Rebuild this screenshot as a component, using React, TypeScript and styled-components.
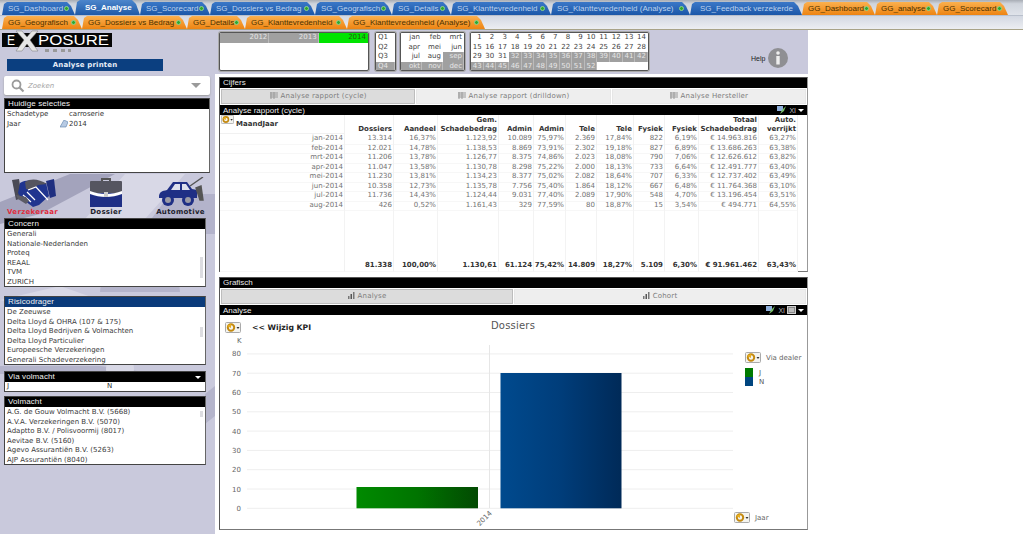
import React from 'react';
import styled, { createGlobalStyle } from 'styled-components';

const Global = createGlobalStyle`
  html, body { margin: 0; padding: 0; background: #fff; overflow: hidden; }
  #root { width: 1023px; height: 549px; overflow: hidden; }
  * { box-sizing: border-box; }
`;
const Page = styled.div`
  width: 1023px; height: 549px; background: #fff; color: #333;
  font-family: "DejaVu Sans", sans-serif; font-size: 7px; display: flex; flex-direction: column;
`;
const TabRow = styled.div<{ $second?: boolean }>`
  height: ${p => (p.$second ? 14 : 16)}px; flex: none; padding-left: 2px; display: flex; align-items: flex-end;
  background: ${p => (p.$second ? 'linear-gradient(#d3d8e2,#eceef2)' : 'linear-gradient(#a8adb5 0,#cfd4dc 25%,#dfe3ea)')};
  border-bottom: 1px solid ${p => (p.$second ? '#a8a388' : '#b9c0cc')};
`;
const Tab = styled.div<{ $w: number; $orange?: boolean; $active?: boolean; $pad: number }>`
  width: ${p => p.$w}px; height: ${p => (p.$active ? 15 : 13)}px; flex: none; display: flex; align-items: center;
  padding: 0 4px 0 ${p => p.$pad}px; white-space: nowrap; overflow: hidden;
  clip-path: polygon(0 100%, 2px 2px, 5px 0, calc(100% - 8px) 0, calc(100% - 4px) 4px, 100% 100%);
  font-family: "Liberation Sans", sans-serif; font-size: 8px;
  font-weight: ${p => (p.$active ? 700 : 400)};
  color: ${p => (p.$orange ? '#4c3200' : p.$active ? '#fff' : '#bcd2ee')};
  background: ${p => (p.$orange ? 'linear-gradient(#fbb04e,#ed8412)' : p.$active ? 'linear-gradient(#4d86cc,#1f5aa8)' : 'linear-gradient(#3b78c8,#1b57a8)')};
`;
const TabDot = styled.span`
  width: 5px; height: 5px; border-radius: 50%; background: #2ea82e; border: 1px solid #8fd08f; margin-left: auto; margin-right: 2px; flex: none;
`;
const TopBand = styled.div`
  width: 808px; height: 44px; background: #c9c9dc; display: flex; align-items: flex-start; flex: none;
`;
const Brand = styled.div`
  width: 219px; flex: none; height: 44px; display: flex; flex-direction: column; align-items: flex-start;
`;
const PrintButton = styled.div`
  width: 156px; height: 12px; margin: 3px 0 0 7px; background: #0b3f80; color: #e8eef8; font-weight: 700;
  font-size: 7px; letter-spacing: .15px; text-align: center; line-height: 12px;
`;
const Selector = styled.div<{ $w: number; $cols: number; $ml: number }>`
  width: ${p => p.$w}px; height: 39px; margin: 2px 0 0 ${p => p.$ml}px; background: #fff; border: 1px solid #555;
  border-radius: 2px; box-shadow: 0 0 0 1px #aaa; display: grid; grid-template-columns: repeat(${p => p.$cols}, minmax(0, 1fr));
  grid-auto-rows: 9.5px; overflow: hidden;
`;
const SelCell = styled.div<{ $state?: 'on' | 'off' | 'green'; $center?: boolean }>`
  text-align: ${p => (p.$center ? 'left' : 'right')}; padding: 0 1px 0 ${p => (p.$center ? 2 : 0)}px; line-height: 9.5px; font-size: 7px;
  white-space: nowrap; border-right: 1px solid ${p => (p.$state === 'off' ? '#bbb' : 'transparent')};
  background: ${p => (p.$state === 'off' ? '#a0a0a0' : p.$state === 'green' ? '#00e400' : '#fff')};
  color: ${p => (p.$state === 'off' ? '#e6e6e6' : p.$state === 'green' ? '#245a10' : '#444')};
`;
const HelpWrap = styled.div`
  margin: 18px 0 0 102px; display: flex; align-items: center; gap: 3px; font-family: "Liberation Sans", sans-serif;
  font-size: 7px; color: #222;
`;
const Body = styled.div`
  flex: 1; display: flex; min-height: 0;
`;
const Sidebar = styled.div`
  position: relative; width: 215px; height: 460px; background: #c9c9dc; flex: none; display: flex; flex-direction: column;
  padding: 2px 0 0 4px; overflow: hidden;
`;
const Watermark = styled.svg`
  position: absolute; left: 0; top: 0; width: 215px; height: 460px;
`;
const SearchBox = styled.div`
  position: relative; width: 206px; height: 19px; background: #fff; border-radius: 2px; box-shadow: 0 1px 2px #999;
  display: flex; align-items: center; padding: 0 7px; gap: 3px; font-size: 7px; font-style: italic; color: #a5a5a5;
`;
const Caret = styled.span`
  margin-left: auto; width: 0; height: 0; border-left: 5px solid transparent; border-right: 5px solid transparent;
  border-top: 5px solid #9a9a9a; margin-right: 2px;
`;
const Box = styled.div<{ $w?: number; $h: number; $mt: number }>`
  position: relative; width: ${p => p.$w ?? 202}px; height: ${p => p.$h}px; margin-top: ${p => p.$mt}px; flex: none;
  background: #fff; border: 1px solid #444; border-right-color: #666; overflow: hidden; display: flex; flex-direction: column;
`;
const BoxTitle = styled.div<{ $navy?: boolean }>`
  height: 10px; flex: none; background: ${p => (p.$navy ? '#0a3a7a' : '#000')}; color: #f0f0f0; padding: 0 3px;
  display: flex; align-items: center; justify-content: space-between;
  font-family: "Liberation Sans", sans-serif; font-size: 8px; letter-spacing: .1px; line-height: 10px;
`;
const WhiteArrow = styled.span`
  width: 0; height: 0; border-left: 3px solid transparent; border-right: 3px solid transparent; border-top: 3px solid #fff; margin-right: 1px;
`;
const ListArea = styled.div`
  flex: 1; padding-top: 1px;
`;
const ListRow = styled.div`
  height: 9.5px; line-height: 9.5px; padding-left: 2px; font-size: 7px; color: #3a3a3a; white-space: nowrap;
`;
const Track = styled.div`
  position: absolute; right: 1px; top: 12px; bottom: 1px; width: 5px; background: #fff;
`;
const Thumb = styled.div<{ $top: number; $h: number }>`
  position: absolute; left: 1px; top: ${p => p.$top}px; height: ${p => p.$h}px; width: 3px; background: #dcdce0;
`;
const SelectionRow = styled.div`
  display: grid; grid-template-columns: 62px 1fr; height: 9.5px; line-height: 9.5px; padding-left: 2px; font-size: 7px; color: #333;
`;
const VolmachtRow = styled(SelectionRow)`
  grid-template-columns: 100px 1fr;
`;
const SelValue = styled.span`
  display: flex; align-items: center; gap: 1px; margin-left: -9px;
`;
const Scenarios = styled.div`
  position: relative; width: 206px; height: 45px; display: grid; grid-template-columns: 57px 90px 1fr; flex: none;
`;
const Scenario = styled.div<{ $active?: boolean }>`
  display: flex; flex-direction: column; align-items: center; height: 45px; font-weight: 700; font-size: 7px; letter-spacing: .3px;
  color: ${p => (p.$active ? '#e02c3c' : '#1d1d2c')}; padding-top: 4px;
  svg { height: 31px; display: block; flex: none; }
  span { line-height: 9px; }
`;
const Main = styled.div`
  width: 593px; padding: 3px 0 0 4px; display: flex; flex-direction: column; gap: 5px;
`;
const Panel = styled.div<{ $h: number }>`
  height: ${p => p.$h}px; flex: none; border: 1px solid #555; border-right-color: #999; border-bottom-color: #777;
  display: flex; flex-direction: column; background: #fff;
`;
const PanelTitle = styled.div`
  height: 10px; background: #000; color: #e8e8e8; padding-left: 3px; font-family: "Liberation Sans", sans-serif;
  font-size: 8px; line-height: 9px; flex: none;
`;
const PanelTabs = styled.div`
  height: 17px; flex: none; display: flex; gap: 1px; background: #fff; padding: 1px;
`;
const PanelTab = styled.div<{ $active?: boolean }>`
  flex: 1; background: ${p => (p.$active ? '#dcdcdc' : '#eeeeee')}; border: 1px solid ${p => (p.$active ? '#bdbdbd' : '#e6e6e6')};
  display: flex; align-items: center; justify-content: center; gap: 3px; font-size: 7px; color: #7c7c7c; letter-spacing: .2px;
  padding-bottom: 2px;
`;
const Caption = styled.div`
  height: 10px; flex: none; background: #000; color: #eee; padding: 0 2px 0 3px; display: flex; justify-content: space-between;
  align-items: center; font-family: "Liberation Sans", sans-serif; font-size: 8px;
`;
const CaptionTools = styled.div`
  display: flex; align-items: center; gap: 2px; font-size: 7px; color: #bbb;
`;
const TableWrap = styled.div`
  flex: 1; display: flex; flex-direction: column; min-height: 0;
`;
const Grid = styled.div<{ $h: number; $bold?: boolean }>`
  display: grid; grid-template-columns: 125px 49px 44px 61px 35px 32px 31px 37px 31px 34px 60px 39px 1fr;
  height: ${p => p.$h}px; flex: none; line-height: ${p => p.$h}px; font-size: 7px; white-space: nowrap;
  font-weight: ${p => (p.$bold ? 700 : 400)}; color: ${p => (p.$bold ? '#333' : '#727272')};
`;
const Cell = styled.div`
  text-align: right; padding-right: 1px; border-right: 1px solid #f1f1f1; border-bottom: 1px solid #f7f7f7;
`;
const HeadCell = styled.div`
  position: relative; text-align: right; padding-right: 1px; font-weight: 700; line-height: 9px; align-self: stretch;
  display: flex; flex-direction: column; justify-content: flex-end; color: #333; border-right: 1px solid #f1f1f1;
`;
const FirstHead = styled.div`
  display: flex; align-items: flex-start; gap: 2px; padding: 0 0 0 1px; text-align: left; font-weight: 700; line-height: 9px; color: #333;
  border-right: 1px solid #f1f1f1; border-bottom: 1px solid #f1f1f1;
  span { margin-top: 5px; }
`;
const Spacer = styled.div`
  flex: 1; display: grid; grid-template-columns: 125px 49px 44px 61px 35px 32px 31px 37px 31px 34px 60px 39px 1fr;
`;
const SpacerCell = styled.div`
  border-right: 1px solid #f3f3f3;
`;
const ChartBody = styled.div`
  position: relative; flex: 1; min-height: 0;
`;
const ChartSvg = styled.svg`
  position: absolute; left: 0; top: 1px; width: 587px; height: 213px;
`;
const KpiControl = styled.div`
  position: absolute; left: 5px; top: 7px; display: flex; align-items: center; gap: 11px; font-weight: 700; font-size: 7.7px; color: #222;
`;
const LegendControl = styled.div`
  position: absolute; left: 525px; top: 37px; display: flex; align-items: center; gap: 5px; font-size: 7px; color: #666;
`;
const JaarControl = styled.div`
  position: absolute; left: 514px; top: 197px; display: flex; align-items: center; gap: 5px; font-size: 7px; color: #666;
`;

const CycleIcon = ({ w = 16 }: { w?: number }) => (
  <svg width={w} height={(w * 11) / 16} viewBox="0 0 16 11">
    <rect x=".5" y=".5" width="15" height="10" rx="1" fill="#f4f4f0" stroke="#aaa" />
    <circle cx="6" cy="5.5" r="3.2" fill="none" stroke="#c48a10" strokeWidth="2" />
    <path d="M2 4l4-2v4z" fill="#e8b020" />
    <path d="M11.5 5h3l-1.5 2z" fill="#333" />
  </svg>
);
const TableIcon = () => (
  <svg width="8" height="7" viewBox="0 0 8 7">
    <path d="M0 1h8M0 3h8M0 5h8M1 0v7M4 0v7" stroke="#999" strokeWidth="1" fill="none" />
  </svg>
);
const BarsIcon = () => (
  <svg width="7" height="7" viewBox="0 0 7 7">
    <rect x="0" y="4" width="1.5" height="3" fill="#777" />
    <rect x="2.5" y="2" width="1.5" height="5" fill="#555" />
    <rect x="5" y="0" width="1.5" height="7" fill="#777" />
  </svg>
);
const XlTools = ({ extra }: { extra?: boolean }) => (
  <CaptionTools>
    <svg width="10" height="9" viewBox="0 0 10 9">
      <rect x="0" y="0" width="6" height="5" fill="#8fb0dc" />
      <path d="M3 8l2-4 4-4-2 5z" fill="#7cc06a" />
    </svg>
    <span>XI</span>
    {extra && (
      <svg width="9" height="8" viewBox="0 0 9 8">
        <rect x=".5" y=".5" width="8" height="7" fill="#888" stroke="#ccc" />
        <path d="M2 3h5M2 5h5" stroke="#eee" />
      </svg>
    )}
    <WhiteArrow />
  </CaptionTools>
);
const Magnifier = () => (
  <svg width="14" height="14" viewBox="0 0 14 14">
    <circle cx="5.5" cy="5.5" r="4" fill="none" stroke="#9b9b9b" strokeWidth="1.8" />
    <path d="M8.5 8.5l4 4" stroke="#9b9b9b" strokeWidth="2.2" />
  </svg>
);
const Handshake = () => (
  <svg viewBox="0 0 48 31" width="48">
    <path d="M3 3l7-1 3 19-6 2z" fill="#4a4a55" />
    <path d="M37 4l8-2 2 17-6 2z" fill="#1f2f80" />
    <path d="M11 6c6-3 10-3 14-1l6 1 6 0 3 13-10 9-6 2-12-9-3-5z" fill="#20358f" />
    <path d="M16 5c6-4 14-3 22 2l-9 1-6 5-6-1z" fill="#55555f" />
    <path d="M19 13l8-3 12 13M14 18l8 7M18 15l8 8" stroke="#fff" strokeWidth="1.2" fill="none" />
    <path d="M7 18l10 2 3 4-3 3-8-5z" fill="#5b5b65" />
  </svg>
);
const Briefcase = () => (
  <svg viewBox="0 0 32 31" width="32">
    <path d="M11 4V1h10v3h-2V3h-6v1z" fill="#555" />
    <rect x="0" y="4" width="32" height="13" rx="1" fill="#555560" />
    <rect x="0" y="16" width="32" height="14" fill="#1f2f85" />
    <path d="M0 14c10 4 22 4 32 0v3c-10 4-22 4-32 0z" fill="#fff" />
    <rect x="14" y="15" width="4" height="5" fill="#ccc" />
  </svg>
);
const Car = () => (
  <svg viewBox="0 0 46 31" width="46">
    <path d="M1 20c0-5 3-6 8-7l6-8h14l5 7 5 1v8H1z" fill="#1f2f85" />
    <path d="M17 7h5v6h-9zM24 7h4l4 6h-8z" fill="#fff" opacity=".85" />
    <circle cx="10" cy="23" r="6" fill="#1f2f85" />
    <circle cx="10" cy="23" r="3" fill="#9a9aa5" />
    <circle cx="30" cy="23" r="6" fill="#1f2f85" />
    <circle cx="30" cy="23" r="3" fill="#9a9aa5" />
    <path d="M32 9L45 0M38 11l5-2 2 14h-3z" stroke="#555" strokeWidth="1.4" fill="#555" />
  </svg>
);
const LogoSvg = styled.svg`
  margin-left: 2px; display: block; flex: none;
`;
const Logo = () => (
  <LogoSvg width="112" height="26" viewBox="0 0 112 26">
    <rect x="0" y="3" width="110" height="14" fill="#060606" />
    <text x="5" y="15" fill="#fff" fontFamily="Liberation Sans, sans-serif" fontSize="14" textLength="8" lengthAdjust="spacingAndGlyphs">E</text>
    <path d="M14 1h6l5 6 5-6h6l-8 9 8 11h-6l-5-7-5 7h-6l8-11z" fill="#e6e6e6" stroke="#777" strokeWidth=".5" />
    <text x="36" y="15" fill="#fff" fontFamily="Liberation Sans, sans-serif" fontSize="14" textLength="71" lengthAdjust="spacingAndGlyphs">POSURE</text>
    <rect x="43" y="19" width="4" height="3" fill="#999" />
    <rect x="51" y="19" width="4" height="3" fill="#999" />
    <rect x="59" y="19" width="4" height="3" fill="#999" />
    <rect x="66" y="19" width="3" height="3" fill="#999" />
  </LogoSvg>
);

type TabDef = { t: string; w: number; o?: boolean; a?: boolean; pad?: number; noDot?: boolean };
const row1: TabDef[] = [
  { t: 'SG_Dashboard', w: 73 }, { t: 'SG_Analyse', w: 65, a: true, pad: 10, noDot: true }, { t: 'SG_Scorecard', w: 70 },
  { t: 'SG_Dossiers vs Bedrag', w: 105 }, { t: 'SG_Geografisch', w: 77 }, { t: 'SG_Details', w: 59 },
  { t: 'SG_Klanttevredenheid', w: 100 }, { t: 'SG_Klanttevredenheid (Analyse)', w: 139 },
  { t: 'SG_Feedback verzekerde', w: 112, pad: 10, noDot: true }, { t: 'GG_Dashboard', w: 73, o: true },
  { t: 'GG_analyse', w: 62, o: true }, { t: 'GG_Scorecard', w: 71, o: true },
];
const row2: TabDef[] = [
  { t: 'GG_Geografisch', w: 80, o: true }, { t: 'GG_Dossiers vs Bedrag', w: 105, o: true }, { t: 'GG_Details', w: 58, o: true },
  { t: 'GG_Klanttevredenheid', w: 102, o: true }, { t: 'GG_Klanttevredenheid (Analyse)', w: 138, o: true },
];
const TabList = ({ tabs }: { tabs: TabDef[] }) => (
  <>
    {tabs.map(({ t, w, o, a, pad, noDot }) => (
      <Tab key={t} $w={w} $orange={o} $active={a} $pad={pad ?? 6}>
        {t}
        {!noDot && <TabDot />}
      </Tab>
    ))}
  </>
);

const months = ['jan', 'feb', 'mrt', 'apr', 'mei', 'jun', 'jul', 'aug', 'sep', 'okt', 'nov', 'dec'];
const weeks = Array.from({ length: 56 }, (_, i) => i + 1);

const lists = {
  concern: ['Generali', 'Nationale-Nederlanden', 'Proteq', 'REAAL', 'TVM', 'ZURICH'],
  risk: ['De Zeeuwse', 'Delta Lloyd & OHRA (107 & 175)', 'Delta Lloyd Bedrijven & Volmachten', 'Delta Lloyd Particulier', 'Europeesche Verzekeringen', 'Generali Schadeverzekering'],
  volmacht: ['A.G. de Gouw Volmacht B.V. (5668)', 'A.V.A. Verzekeringen B.V. (5070)', 'Adaptto B.V. / Polisvoormij (8017)', 'Aevitae B.V. (5160)', 'Agevo Assurantiën B.V. (5263)', 'AJP Assurantiën (8040)'],
};

const heads: string[][] = [
  ['Dossiers'], ['Aandeel'], ['Gem.', 'Schadebedrag'], ['Admin'], ['Admin'], ['Tele'], ['Tele'], ['Fysiek'], ['Fysiek'],
  ['Totaal', 'Schadebedrag'], ['Auto.', 'verrijkt'],
];
const rows: string[][] = [
  ['jan-2014', '13.314', '16,37%', '1.123,92', '10.089', '75,97%', '2.369', '17,84%', '822', '6,19%', '€ 14.963.816', '63,27%'],
  ['feb-2014', '12.021', '14,78%', '1.138,53', '8.869', '73,91%', '2.302', '19,18%', '827', '6,89%', '€ 13.686.263', '63,38%'],
  ['mrt-2014', '11.206', '13,78%', '1.126,77', '8.375', '74,86%', '2.023', '18,08%', '790', '7,06%', '€ 12.626.612', '63,82%'],
  ['apr-2014', '11.047', '13,58%', '1.130,78', '8.298', '75,22%', '2.000', '18,13%', '733', '6,64%', '€ 12.491.777', '63,40%'],
  ['mei-2014', '11.230', '13,81%', '1.134,23', '8.377', '75,02%', '2.082', '18,64%', '707', '6,33%', '€ 12.737.402', '63,49%'],
  ['jun-2014', '10.358', '12,73%', '1.135,78', '7.756', '75,40%', '1.864', '18,12%', '667', '6,48%', '€ 11.764.368', '63,10%'],
  ['jul-2014', '11.736', '14,43%', '1.124,44', '9.031', '77,40%', '2.089', '17,90%', '548', '4,70%', '€ 13.196.454', '63,51%'],
  ['aug-2014', '426', '0,52%', '1.161,43', '329', '77,59%', '80', '18,87%', '15', '3,54%', '€ 494.771', '64,55%'],
];
const totals = ['', '81.338', '100,00%', '1.130,61', '61.124', '75,42%', '14.809', '18,27%', '5.109', '6,30%', '€ 91.961.462', '63,43%'];

const axis = [0, 10, 20, 30, 40, 50, 60, 70, 80];

export default function App() {
  return (
    <Page>
      <Global />
      <TabRow><TabList tabs={row1} /></TabRow>
      <TabRow $second><TabList tabs={row2} /></TabRow>
      <TopBand>
        <Brand>
          <Logo />
          <PrintButton>Analyse printen</PrintButton>
        </Brand>
        <Selector $w={150} $cols={3} $ml={0}>
          <SelCell $state="off">2012</SelCell>
          <SelCell $state="off">2013</SelCell>
          <SelCell $state="green">2014</SelCell>
        </Selector>
        <Selector $w={21} $cols={1} $ml={6}>
          {['Q1', 'Q2', 'Q3', 'Q4'].map(q => (
            <SelCell key={q} $center $state={q === 'Q4' ? 'off' : undefined}>{q}</SelCell>
          ))}
        </Selector>
        <Selector $w={65} $cols={3} $ml={4}>
          {months.map((m, i) => <SelCell key={m} $state={i >= 8 ? 'off' : undefined}>{m}</SelCell>)}
        </Selector>
        <Selector $w={179} $cols={14} $ml={5}>
          {weeks.map(w => (
            <SelCell key={w} $state={w >= 32 && w <= 52 ? 'off' : undefined}>{w <= 52 ? w : '\u00a0'}</SelCell>
          ))}
        </Selector>
        <HelpWrap>
          Help
          <svg width="20" height="20" viewBox="0 0 20 20">
            <circle cx="10" cy="10" r="10" fill="#8f8f93" />
            <circle cx="10" cy="5" r="1.8" fill="#eee" />
            <rect x="8.3" y="8" width="3.4" height="8.5" fill="#eee" />
          </svg>
        </HelpWrap>
      </TopBand>
      <Body>
        <Sidebar>
          <Watermark viewBox="0 0 215 460">
            <path d="M0 128 L70 100 L115 100 L40 140 L0 150z" fill="#a3a3bc" />
            <path d="M125 100h60l-40 45h-60z" fill="#d8d8e6" />
            <path d="M215 120v40h-75l30-40z" fill="#b3b3cb" />
            <path d="M100 218a40 40 0 0 1 80 0z" fill="#b4b4cb" />
            <path d="M0 226l60-14 40 14-40 14z" fill="#d8d8e6" />
            <path d="M0 292h100l60 8H0z" fill="#b4b4cb" />
            <path d="M205 320l10-8v30l-10 8z" fill="#b4b4cb" />
            <circle cx="120" cy="295" r="14" fill="#d8d8e6" />
          </Watermark>
          <SearchBox><Magnifier />Zoeken<Caret /></SearchBox>
          <Box $w={206} $h={75} $mt={3}>
            <BoxTitle>Huidige selecties</BoxTitle>
            <ListArea>
              <SelectionRow><span>Schadetype</span><span>carroserie</span></SelectionRow>
              <SelectionRow>
                <span>Jaar</span>
                <SelValue>
                  <svg width="8" height="8" viewBox="0 0 8 8"><path d="M0 7l4-7 4 2-2 5z" fill="#b8cbe4" stroke="#5b7faa" strokeWidth=".6" /></svg>
                  2014
                </SelValue>
              </SelectionRow>
            </ListArea>
          </Box>
          <Scenarios>
            <Scenario $active><Handshake /><span>Verzekeraar</span></Scenario>
            <Scenario><Briefcase /><span>Dossier</span></Scenario>
            <Scenario><Car /><span>Automotive</span></Scenario>
          </Scenarios>
          <Box $h={69} $mt={0}>
            <BoxTitle>Concern</BoxTitle>
            <ListArea>{lists.concern.map(t => <ListRow key={t}>{t}</ListRow>)}</ListArea>
            <Track><Thumb $top={26} $h={21} /></Track>
          </Box>
          <Box $h={69} $mt={9}>
            <BoxTitle $navy>Risicodrager</BoxTitle>
            <ListArea>{lists.risk.map(t => <ListRow key={t}>{t}</ListRow>)}</ListArea>
            <Track><Thumb $top={18} $h={10} /></Track>
          </Box>
          <Box $h={21} $mt={6}>
            <BoxTitle>Via volmacht<WhiteArrow /></BoxTitle>
            <VolmachtRow><span>J</span><span>N</span></VolmachtRow>
          </Box>
          <Box $h={69} $mt={4}>
            <BoxTitle>Volmacht</BoxTitle>
            <ListArea>{lists.volmacht.map(t => <ListRow key={t}>{t}</ListRow>)}</ListArea>
            <Track><Thumb $top={2} $h={6} /></Track>
          </Box>
        </Sidebar>
        <Main>
          <Panel $h={195}>
            <PanelTitle>Cijfers</PanelTitle>
            <PanelTabs>
              <PanelTab $active><TableIcon />Analyse rapport (cycle)</PanelTab>
              <PanelTab><TableIcon />Analyse rapport (drilldown)</PanelTab>
              <PanelTab><TableIcon />Analyse Hersteller</PanelTab>
            </PanelTabs>
            <Caption>Analyse rapport (cycle)<XlTools /></Caption>
            <TableWrap>
              <Grid $h={19}>
                <FirstHead><CycleIcon w={13} /><span>MaandJaar</span></FirstHead>
                {heads.map((h, i) => (
                  <HeadCell key={i}>{h.map(l => <div key={l}>{l}</div>)}</HeadCell>
                ))}
              </Grid>
              {rows.map(r => (
                <Grid key={r[0]} $h={9.5}>
                  {r.map((c, i) => <Cell key={i}>{c}</Cell>)}
                </Grid>
              ))}
              <Spacer>{Array.from({ length: 12 }, (_, i) => <SpacerCell key={i} />)}</Spacer>
              <Grid $h={11} $bold>
                {totals.map((c, i) => <Cell key={i}>{c}</Cell>)}
              </Grid>
            </TableWrap>
          </Panel>
          <Panel $h={253}>
            <PanelTitle>Grafisch</PanelTitle>
            <PanelTabs>
              <PanelTab $active><BarsIcon />Analyse</PanelTab>
              <PanelTab><BarsIcon />Cohort</PanelTab>
            </PanelTabs>
            <Caption>Analyse<XlTools extra /></Caption>
            <ChartBody>
              <ChartSvg viewBox="0 0 587 213">
                <defs>
                  <linearGradient id="gGreen" x1="0" x2="1" y1="0" y2="0">
                    <stop offset="0" stopColor="#008a00" />
                    <stop offset=".5" stopColor="#007400" />
                    <stop offset="1" stopColor="#024a02" />
                  </linearGradient>
                  <linearGradient id="gBlue" x1="0" x2="1" y1="0" y2="0">
                    <stop offset="0" stopColor="#004a8e" />
                    <stop offset=".5" stopColor="#003d7a" />
                    <stop offset="1" stopColor="#002a58" />
                  </linearGradient>
                </defs>
                <text x="293" y="13" textAnchor="middle" fontFamily="DejaVu Sans, sans-serif" fontSize="10" fill="#555" letterSpacing=".2">Dossiers</text>
                <text x="17" y="27" fontFamily="DejaVu Sans, sans-serif" fontSize="7" fill="#666">K</text>
                {axis.map(v => {
                  const y = 192.3 - v * 1.93;
                  return (
                    <g key={v}>
                      <line x1="27" x2="513" y1={y} y2={y} stroke="#eeeeee" />
                      <text x="21" y={y + 2.5} textAnchor="end" fontFamily="DejaVu Sans, sans-serif" fontSize="7" fill="#666">{v}</text>
                    </g>
                  );
                })}
                <line x1="269.5" x2="269.5" y1="29" y2="192" stroke="#e6e6e6" />
                <rect x="136.5" y="171" width="121.5" height="21.3" fill="url(#gGreen)" />
                <rect x="280.5" y="57" width="121" height="135.3" fill="url(#gBlue)" />
                <text x="266" y="204" textAnchor="middle" transform="rotate(-45 266 204)" fontFamily="DejaVu Sans, sans-serif" fontSize="7" fill="#666">2014</text>
                <rect x="525" y="52" width="8" height="9" fill="#007a00" />
                <rect x="525" y="61" width="8" height="9" fill="#00457f" />
                <text x="539" y="59" fontFamily="DejaVu Sans, sans-serif" fontSize="7" fill="#555">J</text>
                <text x="539" y="68" fontFamily="DejaVu Sans, sans-serif" fontSize="7" fill="#555">N</text>
              </ChartSvg>
              <KpiControl><CycleIcon />&lt;&lt; Wijzig KPI</KpiControl>
              <LegendControl><CycleIcon />Via dealer</LegendControl>
              <JaarControl><CycleIcon />Jaar</JaarControl>
            </ChartBody>
          </Panel>
        </Main>
      </Body>
    </Page>
  );
}
